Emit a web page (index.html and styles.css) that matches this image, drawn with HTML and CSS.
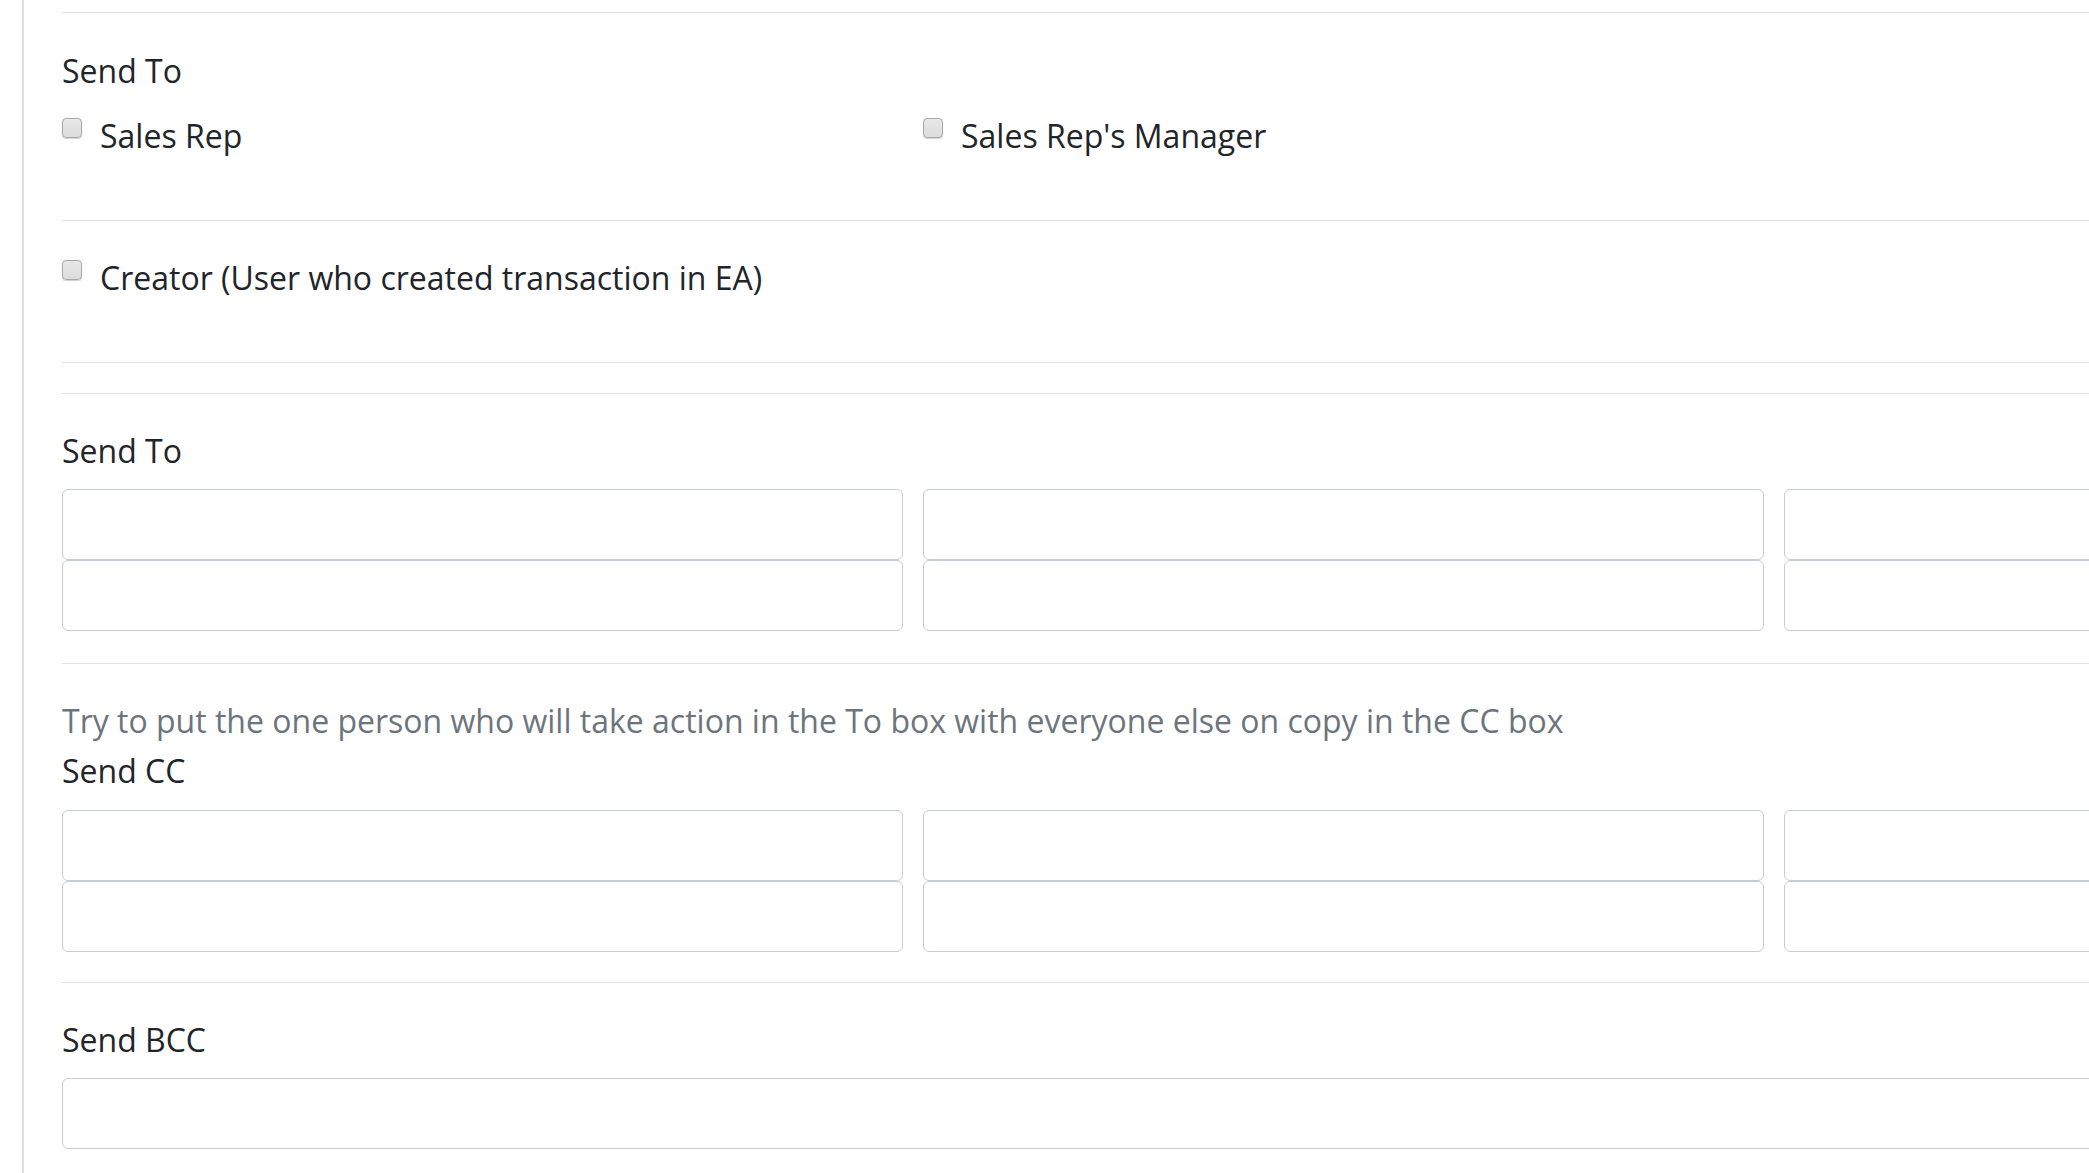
FILE: index.html
```html
<!DOCTYPE html>
<html lang="en">
<head>
<meta charset="utf-8">
<title>Send To</title>
<link rel="stylesheet" href="styles.css">
</head>
<body>
<div class="page">
  <div class="content">
    <hr class="rule rule-top">
    <div class="label label-first">Send To</div>
    <div class="check-row">
      <label class="check"><input type="checkbox" class="cb"><span>Sales Rep</span></label>
      <label class="check"><input type="checkbox" class="cb"><span>Sales Rep's Manager</span></label>
    </div>
    <hr class="rule rule-a">
    <div class="check-row check-row-b">
      <label class="check"><input type="checkbox" class="cb"><span>Creator (User who created transaction in EA)</span></label>
    </div>
    <hr class="rule rule-b">
    <hr class="rule rule-c">
    <div class="label label-to">Send To</div>
    <div class="inputs">
      <input class="field" type="text"><input class="field" type="text"><input class="field" type="text">
      <input class="field" type="text"><input class="field" type="text"><input class="field" type="text">
    </div>
    <hr class="rule rule-d">
    <div class="label hint">Try to put the one person who will take action in the To box with everyone else on copy in the CC box</div>
    <div class="label label-cc">Send CC</div>
    <div class="inputs inputs-cc">
      <input class="field" type="text"><input class="field" type="text"><input class="field" type="text">
      <input class="field" type="text"><input class="field" type="text"><input class="field" type="text">
    </div>
    <hr class="rule rule-e">
    <div class="label label-bcc">Send BCC</div>
    <input class="field field-wide" type="text">
  </div>
</div>
</body>
</html>
```
FILE: styles.css
```css
html, body {
  margin: 0;
  padding: 0;
  background: #ffffff;
  overflow: hidden;
}

body {
  font-family: "Open Sans", "Noto Sans", "Liberation Sans", sans-serif;
  color: #212529;
}

.page {
  margin-left: 22px;
  border-left: 2px solid #dedede;
  padding-left: 38px;
  padding-top: 12px;
  height: 1161px;
  overflow: hidden;
}

.content {
  width: 2563px;
}

.rule {
  border: 0;
  height: 1px;
  background: #e2e2e2;
  margin: 0;
}

.label {
  font-size: 32px;
  line-height: 48px;
  height: 48px;
  white-space: nowrap;
}

.label-first { margin-top: 34px; }

.check-row {
  display: grid;
  grid-template-columns: 841px 841px;
  column-gap: 20px;
  margin-top: 17px;
  height: 48px;
}

.check-row-b { margin-top: 33px; }

.check {
  display: flex;
  align-items: flex-start;
  font-size: 32px;
  line-height: 48px;
  white-space: nowrap;
}

.cb {
  appearance: none;
  -webkit-appearance: none;
  width: 20px;
  height: 20px;
  margin: 6px 18px 0 0;
  box-sizing: border-box;
  border: 1.5px solid #a8a8a8;
  border-radius: 4px;
  background: linear-gradient(#e8e8e8, #dcdcdc);
  box-shadow: 0 1px 1px rgba(0, 0, 0, 0.18);
  flex: none;
}

.rule-a { margin-top: 60px; }
.rule-b { margin-top: 60px; }
.rule-c { margin-top: 30px; }

.label-to { margin-top: 33px; }

.inputs {
  display: grid;
  grid-template-columns: 841px 841px 841px;
  column-gap: 20px;
  margin-top: 14px;
}

.inputs-cc { margin-top: 15px; }

.field {
  display: block;
  box-sizing: border-box;
  width: 100%;
  height: 71px;
  margin: 0;
  border: 1px solid #c6ccd4;
  border-radius: 6px;
  background: #ffffff;
  font: inherit;
}

.rule-d { margin-top: 32px; }

.hint {
  color: #6c757d;
  margin-top: 33px;
}

.label-cc { margin-top: 2px; }

.rule-e { margin-top: 30px; }

.label-bcc { margin-top: 33px; }

.field-wide {
  margin-top: 14px;
  width: 2563px;
}
```
